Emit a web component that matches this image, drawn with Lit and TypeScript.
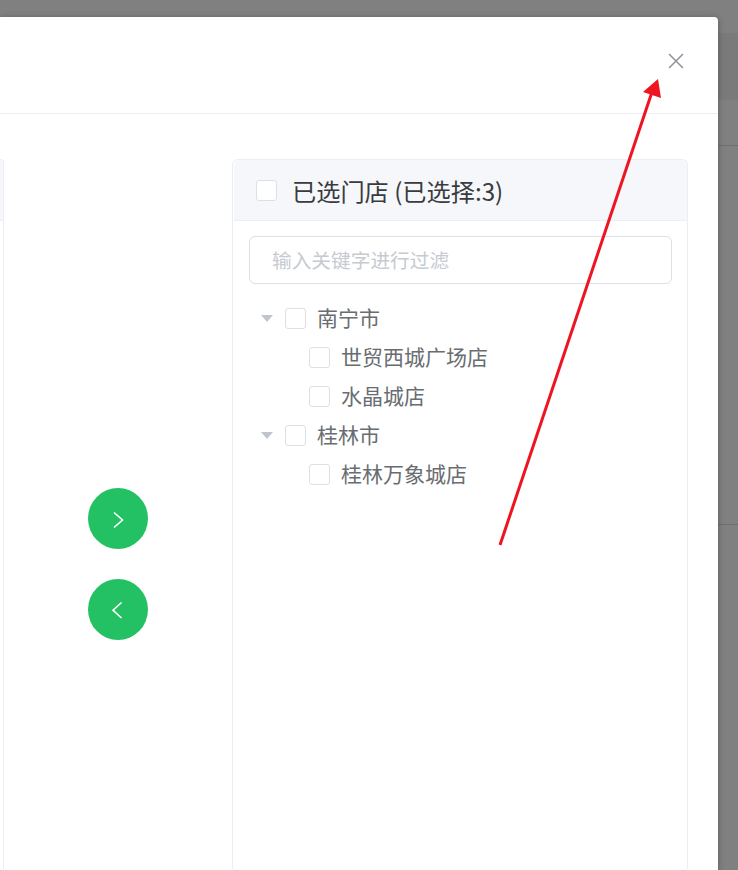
import { LitElement, html, css } from "lit";
import { customElement } from "lit/decorators.js";

const tree = [
  { name: "南宁市", stores: ["世贸西城广场店", "水晶城店"] },
  { name: "桂林市", stores: ["桂林万象城店"] },
];

@customElement("app-root")
class AppRoot extends LitElement {
  static styles = css`
    :host {
      display: block;
      position: relative;
      height: 870px;
      overflow: hidden;
      padding-top: 17px;
      box-sizing: border-box;
      background: linear-gradient(#6f6f6f, #6f6f6f) 0 145px / 100% 1px no-repeat,
        linear-gradient(#6f6f6f, #6f6f6f) 0 524px / 100% 1px no-repeat,
        linear-gradient(#7a7a7a, #7a7a7a) 0 33px / 100% 67px no-repeat, #808080;
      font-family: "Noto Sans CJK SC", "Liberation Sans", sans-serif;
    }

    .dialog {
      width: 718px;
      height: 853px;
      background: #fff;
      border-radius: 0 4px 0 0;
      box-shadow: 0 1px 6px rgba(0, 0, 0, 0.3);
    }

    .dialog-head {
      display: flex;
      justify-content: flex-end;
      height: 97px;
      padding: 35px 33px 0 0;
      box-sizing: border-box;
      border-bottom: 1px solid #ebeef5;
    }

    .close {
      display: block;
      width: 18px;
      height: 18px;
    }

    .body {
      display: flex;
      height: 710px;
      margin-top: 45px;
    }

    .panel-left {
      width: 4px;
      flex: none;
      box-sizing: border-box;
      border-right: 1px solid #ebeef5;
      border-top: 1px solid #ebeef5;
      border-top-right-radius: 6px;
    }

    .panel-left .fill {
      height: 61px;
      background: #f5f7fa;
      border-bottom: 1px solid #ebeef5;
      border-top-right-radius: 6px;
      box-sizing: border-box;
    }

    .mover {
      width: 228px;
      flex: none;
      display: flex;
      flex-direction: column;
      align-items: center;
      gap: 30px;
      padding-top: 329px;
      box-sizing: border-box;
    }

    .round {
      width: 60px;
      height: 61px;
      border-radius: 50%;
      background: #23c163;
      display: flex;
      align-items: center;
      justify-content: center;
    }

    .round svg {
      width: 20px;
      height: 20px;
    }

    .panel {
      width: 456px;
      flex: none;
      box-sizing: border-box;
      border: 1px solid #ebeef5;
      border-bottom: none;
      border-radius: 6px 6px 0 0;
    }

    .panel-head {
      display: flex;
      align-items: center;
      gap: 15px;
      height: 61px;
      padding-left: 22px;
      margin-left: 1px;
      box-sizing: border-box;
      background: #f5f7fa;
      border-bottom: 1px solid #ebeef5;
      border-radius: 6px 6px 0 0;
      font-size: 24.2px;
      color: #3a3b3e;
    }

    .box {
      display: block;
      width: 21px;
      height: 21px;
      flex: none;
      box-sizing: border-box;
      background: #fff;
      border: 1px solid #dcdfe6;
      border-radius: 3px;
    }

    .filter {
      height: 48px;
      margin: 15px 15px 0 16px;
      padding-left: 22px;
      padding-bottom: 1px;
      box-sizing: border-box;
      display: flex;
      align-items: center;
      border: 1px solid #dcdfe6;
      border-radius: 6px;
      font-size: 19.7px;
      color: #c6cad1;
    }

    .tree {
      margin-top: 15px;
      font-size: 21px;
      color: #696c70;
    }

    .row {
      display: flex;
      align-items: center;
      height: 39px;
    }

    .row.city {
      padding-left: 28px;
    }

    .row.store {
      padding-left: 76px;
    }

    .caret {
      width: 0;
      height: 0;
      margin-right: 12px;
      border-left: 6px solid transparent;
      border-right: 6px solid transparent;
      border-top: 7px solid #c0c4cc;
    }

    .label {
      margin-left: 11px;
      margin-bottom: 3px;
    }

    .arrow {
      position: absolute;
      left: 0;
      top: 0;
      pointer-events: none;
    }
  `;

  render() {
    return html`
      <div class="dialog">
        <div class="dialog-head">
          <svg class="close" viewBox="0 0 18 18">
            <path d="M2 2L16 16M16 2L2 16" stroke="#909399" stroke-width="1.5" fill="none" />
          </svg>
        </div>
        <div class="body">
          <div class="panel-left"><div class="fill"></div></div>
          <div class="mover">
            <div class="round">
              <svg viewBox="0 0 20 20">
                <path d="M6 3.5L14.5 11L6 18.5" stroke="#fff" stroke-width="1.6" fill="none" />
              </svg>
            </div>
            <div class="round">
              <svg viewBox="0 0 20 20">
                <path d="M13.5 2.5L5 10.2L13.5 18" stroke="#fff" stroke-width="1.6" fill="none" />
              </svg>
            </div>
          </div>
          <div class="panel">
            <div class="panel-head">
              <span class="box"></span>
              <span>已选门店 (已选择:3)</span>
            </div>
            <div class="filter">输入关键字进行过滤</div>
            <div class="tree">
              ${tree.map(
                (city) => html`
                  <div class="row city">
                    <span class="caret"></span>
                    <span class="box"></span>
                    <span class="label">${city.name}</span>
                  </div>
                  ${city.stores.map(
                    (s) => html`
                      <div class="row store">
                        <span class="box"></span>
                        <span class="label">${s}</span>
                      </div>
                    `
                  )}
                `
              )}
            </div>
          </div>
        </div>
      </div>
      <svg class="arrow" width="738" height="870" viewBox="0 0 738 870">
        <line x1="500" y1="545" x2="652" y2="92" stroke="#ee1420" stroke-width="3" />
        <polygon points="658,79 643,92 661,98" fill="#ee1420" />
      </svg>
    `;
  }
}
